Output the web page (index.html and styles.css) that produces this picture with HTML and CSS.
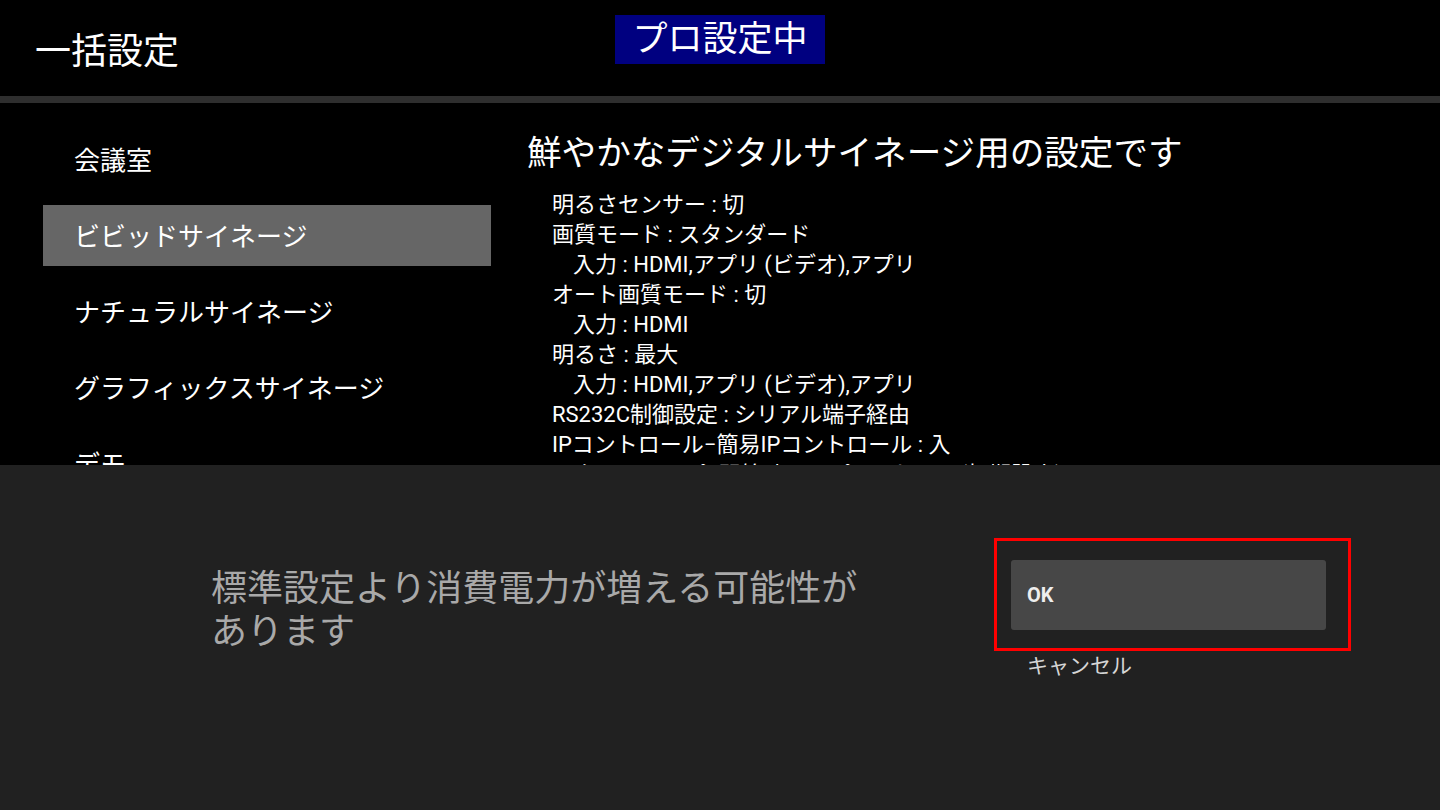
FILE: index.html
```html
<!DOCTYPE html>
<html lang="ja">
<head>
  <meta charset="UTF-8">
  <title>一括設定</title>
  <link rel="stylesheet" href="styles.css">
</head>
<body>
  <div class="screen">
    <header class="header">
      <h1 class="title">一括設定</h1>
      <div class="pro-badge">プロ設定中</div>
      <div></div>
    </header>
    <div class="divider"></div>

    <main class="main">
      <ul class="menu">
        <li class="menu-item">会議室</li>
        <li class="menu-item selected">ビビッドサイネージ</li>
        <li class="menu-item">ナチュラルサイネージ</li>
        <li class="menu-item">グラフィックスサイネージ</li>
        <li class="menu-item">デモ</li>
      </ul>

      <section class="detail">
        <h2 class="detail-title">鮮やかなデジタルサイネージ用の設定です</h2>
        <ul class="settings">
          <li>明るさセンサー : 切</li>
          <li>画質モード : スタンダード</li>
          <li class="sub">入力 : HDMI,アプリ (ビデオ),アプリ</li>
          <li>オート画質モード : 切</li>
          <li class="sub">入力 : HDMI</li>
          <li>明るさ : 最大</li>
          <li class="sub">入力 : HDMI,アプリ (ビデオ),アプリ</li>
          <li>RS232C制御設定 : シリアル端子経由</li>
          <li>IPコントロール−簡易IPコントロール : 入</li>
          <li>スタートアップ−開始時のアプリ : ホーム (初期設定)</li>
        </ul>
      </section>
    </main>

    <div class="dialog">
      <p class="dialog-message">標準設定より消費電力が増える可能性があります</p>
      <div class="dialog-actions">
        <div class="focus-frame">
          <button class="btn-ok">OK</button>
        </div>
        <button class="btn-cancel">キャンセル</button>
      </div>
    </div>
  </div>
</body>
</html>
```

FILE: styles.css
```css
body {
  margin: 0;
  background-color: #000;
  color: #fff;
  font-family: Roboto, "Noto Sans CJK JP", sans-serif;
}
.screen {
  width: 1440px;
  height: 810px;
  overflow: hidden;
  display: flex;
  flex-direction: column;
}
.header {
  height: 96px;
  display: grid;
  grid-template-columns: 1fr auto 1fr;
  align-items: start;
}
.title {
  margin: 0;
  padding: 29px 0 0 35px;
  font-size: 36px;
  font-weight: 400;
  line-height: 46px;
}
.pro-badge {
  margin-top: 15px;
  padding: 0 17px 0 17px;
  height: 49px;
  line-height: 49px;
  font-size: 35px;
  background-color: #000080;
}
.divider {
  height: 7px;
  background-color: #2e2e2e;
}
.main {
  height: 362px;
  overflow: hidden;
  display: flex;
}
.menu {
  list-style: none;
  margin: 26px 0 0 43px;
  padding: 0;
  width: 448px;
  display: flex;
  flex-direction: column;
  gap: 15px;
}
.menu-item {
  height: 57px;
  padding: 4px 0 0 31px;
  line-height: 57px;
  font-size: 26px;
  flex-shrink: 0;
}
.menu-item.selected {
  background-color: #666;
}
.detail {
  padding: 28px 0 0 36px;
}
.detail-title {
  margin: 0 0 15px;
  font-size: 34.6px;
  font-weight: 400;
  line-height: 44px;
}
.settings {
  list-style: none;
  margin: 0;
  padding: 0 0 0 25px;
  font-size: 22px;
  line-height: 30px;
}
.settings .sub {
  padding-left: 21px;
}
.dialog {
  height: 345px;
  background-color: #212121;
  display: flex;
  align-items: flex-start;
}
.dialog-message {
  margin: 103px 0 0 211px;
  width: 660px;
  font-size: 36px;
  line-height: 43px;
  color: #a9a9a9;
}
.dialog-actions {
  margin: 73px 0 0 123px;
  display: flex;
  flex-direction: column;
}
.focus-frame {
  width: 351px;
  height: 107px;
  border: 3px solid #f00;
  display: flex;
  align-items: center;
}
.btn-ok {
  margin-left: 14px;
  width: 315px;
  height: 70px;
  border: none;
  border-radius: 3px;
  background-color: #474747;
  color: #eee;
  font-family: Roboto, "Noto Sans CJK JP", sans-serif;
  font-size: 20px;
  font-weight: 700;
  text-align: left;
  padding: 0 0 0 16px;
}
.btn-cancel {
  align-self: flex-start;
  margin: 1px 0 0 33px;
  padding: 0;
  border: none;
  background: none;
  color: #d6d6d6;
  font-family: Roboto, "Noto Sans CJK JP", sans-serif;
  font-size: 21px;
  line-height: 28px;
}
```
